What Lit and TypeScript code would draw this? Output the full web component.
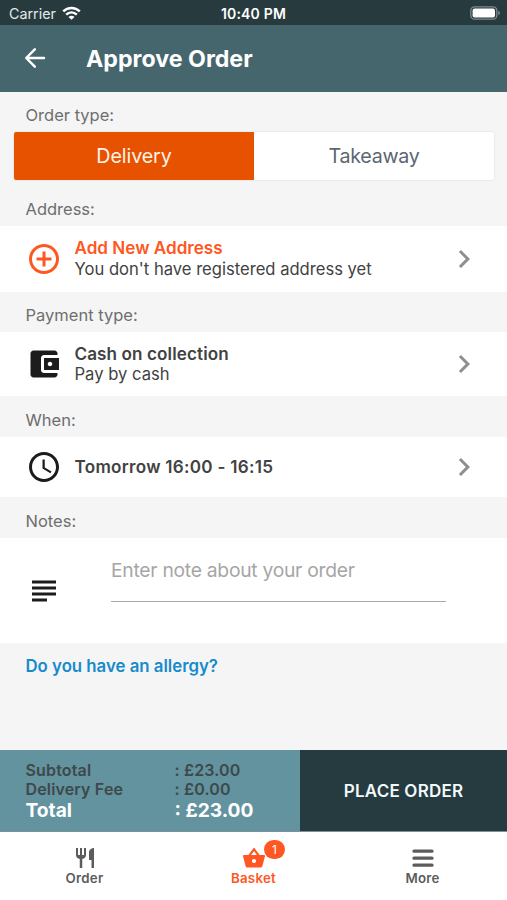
import { LitElement, html, css, svg } from "lit";
import { customElement } from "lit/decorators.js";

const ICONS = {
  add: "M13 7h-2v4H7v2h4v4h2v-4h4v-2h-4V7zm-1-5C6.48 2 2 6.48 2 12s4.48 10 10 10 10-4.48 10-10S17.52 2 12 2zm0 18c-4.41 0-8-3.59-8-8s3.59-8 8-8 8 3.59 8 8-3.59 8-8 8z",
  wallet: "M21 18v1c0 1.1-.9 2-2 2H5c-1.11 0-2-.9-2-2V5c0-1.1.89-2 2-2h14c1.1 0 2 .9 2 2v1h-9c-1.11 0-2 .9-2 2v8c0 1.1.89 2 2 2h9zm-9-2h10V8H12v8zm4-2.5c-.83 0-1.5-.67-1.5-1.5s.67-1.5 1.5-1.5 1.5.67 1.5 1.5-.67 1.5-1.5 1.5z",
  clock: "M11.99 2C6.47 2 2 6.48 2 12s4.47 10 9.99 10C17.52 22 22 17.52 22 12S17.52 2 11.99 2zM12 20c-4.42 0-8-3.58-8-8s3.58-8 8-8 8 3.58 8 8-3.58 8-8 8zm.5-13H11v6l5.25 3.15.75-1.23-4.5-2.67z",
  subject: "M14 17H4v2h10v-2zm6-8H4v2h16V9zM4 15h16v-2H4v2zM4 5v2h16V5H4z",
  chevron: "M10 6L8.59 7.41 13.17 12l-4.58 4.59L10 18l6-6z",
  cutlery: "M11 9H9V2H7v7H5V2H3v7c0 2.12 1.66 3.84 3.75 3.97V22h2.5v-9.03C11.34 12.84 13 11.12 13 9V2h-2v7zm5-3v8h2.5v8H21V2c-2.76 0-5 2.24-5 4z",
  basket: "M5.5 21.5c-.8 0-1.5-.45-1.8-1.1L1.1 10.4 1 9.5c0-.3.4-.6 1-.6h4.4L11.2 2.4c.4-.55 1.2-.55 1.6 0l4.8 6.5H22c.6 0 1 .3 1 .6l-.04.8-2.67 10.1c-.3.65-1 1.1-1.8 1.1h-13zM12 4.9L9.1 8.9h5.8L12 4.9zm0 8a2.1 2.1 0 1 0 0 4.2 2.1 2.1 0 1 0 0-4.2z",
};

const icon = (name: keyof typeof ICONS, cls = "icon") =>
  html`<svg class=${cls} viewBox="0 0 24 24">${svg`<path d=${ICONS[name]} />`}</svg>`;

@customElement("app-root")
export class AppRoot extends LitElement {
  static styles = css`
    :host { display: flex; flex-direction: column; width: 507px; height: 900px; background: #f5f5f5; color: #424242; font-family: Inter, "Liberation Sans", sans-serif; font-size: 16px; overflow: hidden; white-space: nowrap; }
    * { box-sizing: border-box; }
    svg { fill: currentColor; display: block; flex: none; }
    .status { height: 25px; flex: none; display: grid; grid-template-columns: 1fr auto 1fr; align-items: center; padding: 2px 7px 0 9px; background: #273b3f; color: #fff; }
    .carrier { display: flex; align-items: center; gap: 6px; color: #e3e8e9; font-size: 14.3px; }
    .wifi { width: 19px; height: 14px; margin-top: -2px; color: #fff; }
    .time { font-weight: 600; font-size: 14px; letter-spacing: 0.2px; margin-right: 2px; }
    .battery { width: 30px; height: 14px; justify-self: end; margin-top: -1px; }
    header { height: 67px; flex: none; display: flex; align-items: center; padding-left: 24px; background: #46666e; color: #fff; }
    .back { width: 22px; height: 22px; margin-top: -1px; fill: none; stroke: #fff; stroke-width: 2.7; stroke-linecap: round; stroke-linejoin: round; }
    h1 { margin: 0 0 0 40px; font-size: 23.2px; font-weight: 700; }
    .label { padding-left: 25.5px; color: #6e6e6e; font-size: 16.5px; line-height: 40px; height: 40px; flex: none; }
    .label.first { line-height: 46px; }
    .label.address { height: 46px; line-height: 58px; }
    .label.payment { line-height: 46px; }
    .label.when { height: 41px; line-height: 48px; }
    .label.notes-label { height: 41px; line-height: 49px; }
    .segmented { display: flex; flex: none; height: 48px; margin: 0 13px 0 14px; border-radius: 2px; background: #fff; box-shadow: 0 0 2px #d0d0d0; overflow: hidden; font-size: 19.7px; line-height: 48px; text-align: center; color: #5d6673; letter-spacing: -0.3px; }
    .segment { flex: 1; }
    .segment.active { background: #e65200; color: #fff3e8; letter-spacing: -0.1px; }
    .row { display: flex; align-items: center; flex: none; height: 66px; padding: 0 25px 0 25.5px; background: #fff; }
    .row.pay { height: 64px; }
    .row.time-row { height: 60px; }
    .icon { width: 36px; height: 36px; color: #1c1c1c; }
    .orange, .orange .icon, .orange .title { color: #ff5722; }
    .text { flex: 1; margin-left: 13px; font-size: 16.6px; line-height: 20px; color: #424242; }
    .row.orange .text { margin-top: -1px; line-height: 20.5px; }
    .title { font-weight: 600; font-size: 17.1px; letter-spacing: 0.1px; }
    .orange .title { letter-spacing: 0; }
    .time-row .title { letter-spacing: 0.28px; }
    .chevron { width: 36px; height: 36px; color: #8f8f8f; }
    .note { display: flex; align-items: center; flex: none; height: 105px; background: #fff; padding: 0 61px 0 25.5px; }
    .field { flex: 1; height: 63px; margin: 0 0 41px 49.5px; align-self: flex-end; border-bottom: 1.5px solid #a9a9a9; color: #a6a6a6; font-size: 19.3px; letter-spacing: -0.27px; line-height: 63px; }
    .allergy { padding-left: 25.5px; font-size: 16.8px; font-weight: 600; line-height: 46px; color: #168bcb; flex: 1; }
    footer { display: flex; flex: none; height: 82px; background: #263b3f; border-bottom: 1px solid #78919a; }
    .totals { width: 300px; padding: 10px 0 0 25.5px; display: grid; grid-template-columns: 149px 1fr; grid-template-rows: 19px 20px 22px; align-items: center; align-content: start; background: #62939f; font-size: 16px; letter-spacing: 0.15px; font-weight: 600; color: #3e484a; }
    .total { font-size: 19.2px; font-weight: 700; letter-spacing: 0; color: #fff; }
    .place { flex: 1; display: grid; place-items: center; color: #f1fafa; font-size: 17px; letter-spacing: 0.2px; font-weight: 600; }
    nav { display: flex; flex: none; height: 68px; background: #fff; color: #5c5c5c; font-size: 13.3px; letter-spacing: 0.25px; font-weight: 600; text-align: center; }
    .tab { flex: 1; display: flex; flex-direction: column; align-items: center; padding-top: 14px; line-height: 17px; }
    .glyph { position: relative; height: 24px; }
    .tab-icon { width: 24px; height: 24px; }
    .badge { position: absolute; left: 22.5px; top: -6px; width: 21px; height: 19px; border-radius: 10px; background: #ff5722; color: #fff; font-size: 12px; font-weight: 400; line-height: 19px; }
  `;

  render() {
    return html`
      <div class="status">
        <div class="carrier"><span>Carrier</span>
          <svg class="wifi" viewBox="0 0 19 14">
            <path d="M9.5 13.8L12.5 10.9C10.9 9.3 8.1 9.3 6.5 10.9Z" />
            <path d="M4.2 8.7C7.3 5.8 11.7 5.8 14.8 8.7M1.2 5.4C6 .7 13 .7 17.8 5.4" fill="none" stroke="#fff" stroke-width="2.5" />
          </svg>
        </div>
        <span class="time">10:40 PM</span>
        <svg class="battery" viewBox="0 0 30 14">
          <rect x=".8" y=".8" width="26" height="12.4" rx="3.6" fill="none" stroke="#7d898c" stroke-width="1.3" />
          <rect x="2.6" y="2.6" width="22.4" height="8.8" rx="2" />
          <path d="M28.2 4.8Q30 5.5 30 7T28.2 9.2Z" fill="#7d898c" />
        </svg>
      </div>
      <header>
        <svg class="back" viewBox="0 0 24 24"><path d="M21.8 12H3M11.8 2.5L2.4 12L11.8 21.5" /></svg>
        <h1>Approve Order</h1>
      </header>
      <div class="label first">Order type:</div>
      <div class="segmented">
        <div class="segment active">Delivery</div>
        <div class="segment">Takeaway</div>
      </div>
      <div class="label address">Address:</div>
      <div class="row orange">${icon("add")}
        <div class="text"><div class="title">Add New Address</div><div>You don't have registered address yet</div></div>
        ${icon("chevron", "chevron")}</div>
      <div class="label payment">Payment type:</div>
      <div class="row pay">${icon("wallet")}
        <div class="text"><div class="title">Cash on collection</div><div>Pay by cash</div></div>
        ${icon("chevron", "chevron")}</div>
      <div class="label when">When:</div>
      <div class="row time-row">${icon("clock")}
        <div class="text"><div class="title">Tomorrow 16:00 - 16:15</div></div>
        ${icon("chevron", "chevron")}</div>
      <div class="label notes-label">Notes:</div>
      <div class="note">${icon("subject")}<div class="field">Enter note about your order</div></div>
      <div class="allergy">Do you have an allergy?</div>
      <footer>
        <div class="totals">
          <span>Subtotal</span><span>: £23.00</span>
          <span>Delivery Fee</span><span>: £0.00</span>
          <span class="total">Total</span><span class="total">: £23.00</span>
        </div>
        <div class="place">PLACE ORDER</div>
      </footer>
      <nav>
        <div class="tab"><div class="glyph">${icon("cutlery", "tab-icon")}</div>Order</div>
        <div class="tab orange"><div class="glyph">${icon("basket", "tab-icon")}<span class="badge">1</span></div>Basket</div>
        <div class="tab"><div class="glyph"><svg class="tab-icon" viewBox="0 0 24 24"><path d="M3 5.2H21M3 12.2H21M3 19.2H21" stroke="currentColor" stroke-width="3.3" stroke-linecap="round" /></svg></div>More</div>
      </nav>
    `;
  }
}
